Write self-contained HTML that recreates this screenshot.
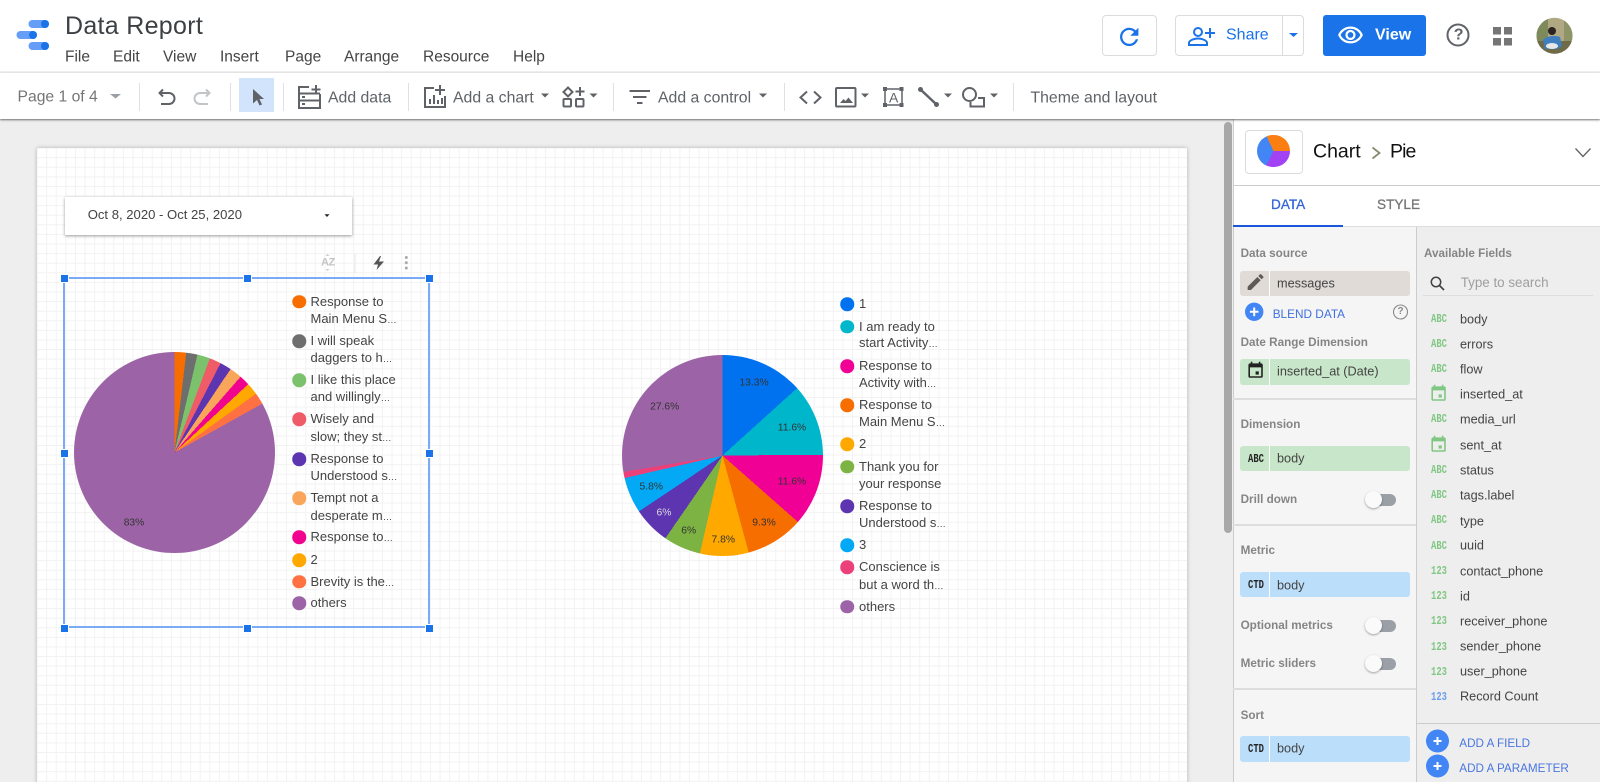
<!DOCTYPE html>
<html><head><meta charset="utf-8"><title>Data Report</title>
<style>
html{background:#eee}
html,body{margin:0;padding:0;width:1600px;height:782px;overflow:hidden;font-family:"Liberation Sans",sans-serif;color:#444}
body{background:#eee;filter:blur(.3px)}
.a{position:absolute}
.t{position:absolute;transform:translateY(-50%);white-space:nowrap;line-height:1.2}
svg.o{position:absolute;left:0;top:0;overflow:visible}
.menu{font-size:15.5px;color:#444;top:57.5px}
.tb{font-size:15.8px;color:#5f6368;top:99px}
.sep{position:absolute;top:83px;height:28px;width:1px;background:#e0e0e0}
.lab{font-size:11.7px;font-weight:bold;color:#858585;left:1240.6px;margin-top:1px}
.f{font-size:12.7px;color:#444;left:1460px;margin-top:1px}
.c{font-size:12.7px;color:#444;left:1277px}
.chip{position:absolute;left:1240px;width:170px;border-radius:3px}
.chip i{position:absolute;left:29px;top:0;bottom:0;width:1px;background:#fff}
.m{position:absolute;font-family:"Liberation Mono",monospace;font-weight:bold;font-size:11.5px;margin-top:1px;transform:translateY(-50%) scaleX(.77);transform-origin:left center;white-space:nowrap;line-height:1.2}
.tg{position:absolute;left:1373px;width:23px;height:12px;border-radius:6px;background:#9aa0a6}
.tg b{position:absolute;left:-8px;top:-3px;width:17px;height:17px;border-radius:50%;background:#fafafa;box-shadow:0 1px 2px rgba(0,0,0,.35)}
.d{position:absolute;left:1233px;width:183px;height:2px;background:#ddd}
.h{position:absolute;width:7px;height:7px;background:#1a73e8;border:1px solid #fff;margin:-4.5px 0 0 -4.5px}
.lg{font-size:13px;color:#444}
.lg s{text-decoration:none;font-size:9.5px}
.dot{position:absolute;width:13.5px;height:13.5px;border-radius:50%;transform:translate(-50%,-50%)}
.pl{font-size:10.3px;color:#333;transform:translate(-50%,-50%);position:absolute;white-space:nowrap}
.pie{position:absolute;border-radius:50%}
</style></head><body>

<!-- header -->
<div class="a" style="left:0;top:0;width:1600px;height:71px;background:#fff"></div>
<div class="a" style="left:0;top:71px;width:1600px;height:2px;background:#efefef"></div>
<div class="a" style="left:0;top:73px;width:1600px;height:45.5px;background:#fff;box-shadow:0 1px 2px rgba(0,0,0,.55);z-index:3"></div>

<!-- canvas page -->
<div class="a" style="left:37px;top:148px;width:1150px;height:640px;background-color:#fff;background-image:linear-gradient(#f2f2f2 1px,transparent 1px),linear-gradient(90deg,#f2f2f2 1px,transparent 1px);background-size:9.6px 9.6px;background-position:-0.4px 9.2px,9.2px 0;box-shadow:0 0 4px rgba(0,0,0,.25)"></div>

<!-- scrollbar -->
<div class="a" style="left:1224px;top:122px;width:8px;height:411px;background:#a8a8a8;border-radius:4px"></div>

<!-- right panel backgrounds -->
<div class="a" style="left:1233px;top:119px;width:367px;height:663px;background:#fff;border-left:1px solid #ccc;box-sizing:border-box"></div>
<div class="a" style="left:1234px;top:185px;width:366px;height:1px;background:#ccc"></div>
<div class="a" style="left:1234px;top:227px;width:182px;height:555px;background:#f5f5f5"></div>
<div class="a" style="left:1416px;top:227px;width:184px;height:555px;background:#eee;border-left:1px solid #ccc;box-sizing:border-box"></div>
<div class="a" style="left:1234px;top:226px;width:366px;height:1px;background:#ddd"></div>
<div class="a" style="left:1233px;top:225px;width:110px;height:2px;background:#1a56db"></div>

<!-- main svg icons -->
<svg class="o" width="1600" height="782" style="z-index:4" fill="none" stroke-linecap="butt">
<defs>
<symbol id="cal" viewBox="0 0 24 24"><path fill="currentColor" d="M19 3h-1V1h-2v2H8V1H6v2H5c-1.11 0-1.99.9-1.99 2L3 19c0 1.1.89 2 2 2h14c1.1 0 2-.9 2-2V5c0-1.1-.9-2-2-2zm0 16H5V8h14v11z"/><rect fill="currentColor" x="12" y="13" width="4" height="4"/></symbol>
<clipPath id="av"><circle cx="1554.5" cy="35.8" r="18"/></clipPath>
</defs>
<!-- logo -->
<rect x="28.5" y="20" width="20.5" height="8" rx="4" fill="#669df6"/><circle cx="45" cy="24" r="4" fill="#1a73e8"/>
<rect x="16.5" y="31" width="20.5" height="8" rx="4" fill="#669df6"/><circle cx="33" cy="35" r="4" fill="#1a73e8"/>
<rect x="28.5" y="42" width="20.5" height="8" rx="4" fill="#669df6"/><circle cx="45" cy="46" r="4" fill="#1a73e8"/>
<!-- refresh -->
<g transform="translate(1115.400,23.100) scale(1.150)" fill="#1a73e8"><path d="M17.65 6.35C16.2 4.9 14.21 4 12 4c-4.42 0-7.99 3.58-7.99 8s3.57 8 7.99 8c3.73 0 6.84-2.55 7.73-6h-2.08c-.82 2.33-3.04 4-5.65 4-3.31 0-6-2.69-6-6s2.69-6 6-6c1.66 0 3.14.69 4.22 1.78L13 11h7V4l-2.35 2.35z"/></g>
<!-- share person -->
<g stroke="#1a73e8" stroke-width="2"><circle cx="1198" cy="32" r="4"/><path d="M1189 45v-2c0-3 6-4.500 9-4.500s9 1.500 9 4.500v2z"/><path d="M1210 28v10M1205 33h10"/></g>
<path d="M1289 33h9l-4.500 4z" fill="#1a73e8"/>
<!-- help -->
<circle cx="1458" cy="35" r="10.500" stroke="#5f6368" stroke-width="2"/>
<!-- grid -->
<g fill="#757575"><rect x="1493" y="27" width="8" height="7.500"/><rect x="1504" y="27" width="8" height="7.500"/><rect x="1493" y="38" width="8" height="7.500"/><rect x="1504" y="38" width="8" height="7.500"/></g>
<!-- avatar -->
<g clip-path="url(#av)"><rect x="1536" y="17" width="38" height="38" fill="#b0a883"/><rect x="1536" y="17" width="12" height="24" fill="#7f8a5c"/><rect x="1564" y="20" width="10" height="22" fill="#8f9468"/><rect x="1536" y="41" width="38" height="15" fill="#6f6a48"/><circle cx="1552" cy="31" r="4" fill="#2b2420"/><path d="M1543 40c3-4 12-5 17-3l2 9-5 3h-12z" fill="#3f7fc0"/><ellipse cx="1552" cy="46" rx="6" ry="3" fill="#e8e8e8"/></g>

<!-- toolbar -->
<path d="M110 94h11l-5.500 4.500z" fill="#9aa0a6"/>
<g stroke="#5f6368" stroke-width="2"><path d="M163 89.500l-3.500 3.500 3.500 3.500M160 93h9a5 5 0 0 1 0 11h-8"/></g>
<g stroke="#c2c5c8" stroke-width="2"><path d="M206 89.500l3.500 3.500-3.500 3.500M209 93h-9a5 5 0 0 0 0 11h8"/></g>
<path d="M253 89l11 10h-4.500l2.500 5.500-2.500 1-2.500-5.500-4 3.500z" fill="#5f6368"/>
<!-- add data -->
<g stroke="#5f6368" stroke-width="2"><path d="M309 87h-10v21h21v-14M299 93.500h21M299 100.500h21M316 85v9M311.500 89.500h9"/><path d="M302 97h3M302 104h3"/></g>
<!-- add chart -->
<g stroke="#5f6368" stroke-width="2"><path d="M434 88h-9v19h20v-11M430 99v5M434 95v9M438 100v4M442 98v6M440 85v10M435 90h10"/></g>
<path d="M541 93.500h8l-4 4z" fill="#5f6368"/>
<!-- components -->
<g stroke="#5f6368" stroke-width="2"><path d="M568 87.500l4.500 4.500-4.500 4.500-4.500-4.500z"/><path d="M580 87v9M575.500 91.500h9"/><rect x="563.500" y="99" width="7.500" height="7.500" rx="1"/><rect x="576" y="99" width="7.500" height="7.500" rx="1"/></g>
<path d="M589.500 93.500h8l-4 4z" fill="#5f6368"/>
<!-- filter -->
<g stroke="#5f6368" stroke-width="2"><path d="M629.500 91h20.500M633 97h13.500M637 103h5.500"/></g>
<path d="M759 93.500h8l-4 4z" fill="#5f6368"/>
<!-- code -->
<g stroke="#5f6368" stroke-width="2"><path d="M807 91.500l-6.500 6 6.500 6M814 91.500l6.500 6-6.500 6"/></g>
<!-- image -->
<g stroke="#5f6368" stroke-width="2"><rect x="836" y="88" width="19.500" height="18.500" rx="1"/></g>
<path d="M840 103l3.500-4 2 2 3-3.500 4.500 5.500z" fill="#5f6368"/>
<path d="M861 93.500h8l-4 4z" fill="#5f6368"/>
<!-- text box -->
<rect x="885" y="89" width="17" height="16" stroke="#5f6368" stroke-width="1.500"/>
<g fill="#5f6368"><rect x="883" y="87" width="4" height="4"/><rect x="899.500" y="87" width="4" height="4"/><rect x="883" y="103" width="4" height="4"/><rect x="899.500" y="103" width="4" height="4"/></g>
<!-- line -->
<path d="M920.500 89.500l16 15" stroke="#5f6368" stroke-width="2.500"/><circle cx="920.500" cy="89.500" r="2.500" fill="#5f6368"/><circle cx="936.500" cy="104.500" r="2.500" fill="#5f6368"/>
<path d="M944 93.500h8l-4 4z" fill="#5f6368"/>
<!-- shape -->
<circle cx="969.500" cy="94.500" r="6.500" stroke="#5f6368" stroke-width="2"/><path d="M978 98h6v8.500h-13.500v-4.500" stroke="#5f6368" stroke-width="2"/>
<path d="M990 93.500h8l-4 4z" fill="#5f6368"/>

<!-- panel chevron, arrow -->
<path d="M1575.500 148.500l7.500 8 7.500-8" stroke="#5f6368" stroke-width="1.300"/>
<path d="M1372.500 147.500l7 5.500-7 5.500" stroke="#8a8a72" stroke-width="1.800"/>

<!-- pencil -->
<g transform="translate(1245,271.500) scale(.88)" fill="#5f5a56"><path d="M3 17.250V21h3.750L17.810 9.940l-3.750-3.750L3 17.250zM20.710 7.040c.39-.39.39-1.020 0-1.410l-2.340-2.340c-.39-.39-1.020-.39-1.410 0l-1.830 1.830 3.750 3.750 1.830-1.830z"/></g>
<!-- blend plus -->
<circle cx="1254.200" cy="311.800" r="9.200" fill="#4285f4"/><path d="M1254.200 307.500v8.600M1249.900 311.800h8.600" stroke="#fff" stroke-width="2"/>
<circle cx="1400.500" cy="312" r="7" stroke="#8a8a8a" stroke-width="1.100"/>
<!-- search -->
<circle cx="1436" cy="282" r="4.700" stroke="#424242" stroke-width="1.500"/><path d="M1439.500 285.500l4.500 4.500" stroke="#424242" stroke-width="1.700"/>
<!-- add circles -->
<circle cx="1437.500" cy="741" r="11.500" fill="#4285f4"/><path d="M1437.500 737v8M1433.500 741h8" stroke="#fff" stroke-width="2"/>
<circle cx="1437.500" cy="766" r="11.500" fill="#4285f4"/><path d="M1437.500 762v8M1433.500 766h8" stroke="#fff" stroke-width="2"/>
<circle cx="1252" cy="790" r="8" fill="#4285f4"/>
</svg>

<!-- title & menu -->
<div class="t" style="left:65px;top:25.500px;font-size:25px;letter-spacing:.3px;color:#3c4043;z-index:5">Data Report</div>
<div class="t menu" style="left:65px">File</div>
<div class="t menu" style="left:113px">Edit</div>
<div class="t menu" style="left:163px">View</div>
<div class="t menu" style="left:220px">Insert</div>
<div class="t menu" style="left:285px">Page</div>
<div class="t menu" style="left:344px">Arrange</div>
<div class="t menu" style="left:423px">Resource</div>
<div class="t menu" style="left:513px">Help</div>

<!-- top right buttons -->
<div class="a" style="left:1102px;top:15px;width:55px;height:41px;border:1px solid #dadce0;border-radius:4px;box-sizing:border-box;z-index:1"></div>
<div class="a" style="left:1175px;top:15px;width:129px;height:41px;border:1px solid #dadce0;border-radius:4px;box-sizing:border-box;z-index:1"></div>
<div class="a" style="left:1282px;top:15px;width:1px;height:41px;background:#dadce0;z-index:1"></div>
<div class="t" style="left:1226px;top:34.700px;font-size:16px;color:#1a73e8;z-index:5">Share</div>
<div class="a" style="left:1323px;top:15px;width:103px;height:41px;background:#1a73e8;border-radius:3px;z-index:1"></div>
<svg class="a" style="left:1337px;top:22px;z-index:5" width="27" height="27" viewBox="0 0 24 24" fill="#fff"><path d="M12 6c3.790 0 7.170 2.130 8.820 5.500C19.170 14.870 15.790 17 12 17s-7.170-2.130-8.820-5.500C4.830 8.130 8.210 6 12 6m0-2C7 4 2.730 7.110 1 11.500 2.730 15.890 7 19 12 19s9.270-3.110 11-7.500C21.270 7.110 17 4 12 4zm0 5c1.380 0 2.500 1.120 2.500 2.500S13.380 14 12 14s-2.500-1.120-2.500-2.500S10.620 9 12 9zm0-2c-2.480 0-4.500 2.020-4.500 4.500S9.520 16 12 16s4.500-2.020 4.500-4.500S14.480 7 12 7z"/></svg>
<div class="t" style="left:1375px;top:35px;font-size:16px;font-weight:bold;color:#fff;z-index:5">View</div>
<div class="t" style="left:1453.700px;top:35px;font-size:16px;font-weight:bold;color:#5f6368;z-index:5">?</div>

<!-- toolbar text -->
<div class="a" style="left:239px;top:78px;width:35px;height:34px;background:#d2e3fc;z-index:3"></div>
<div class="sep" style="left:139px;z-index:4"></div><div class="sep" style="left:230px;z-index:4"></div><div class="sep" style="left:283px;z-index:4"></div><div class="sep" style="left:408px;z-index:4"></div><div class="sep" style="left:613px;z-index:4"></div><div class="sep" style="left:784px;z-index:4"></div><div class="sep" style="left:1013px;z-index:4"></div>
<div class="t tb" style="left:17.500px;top:98px;font-size:15.700px;color:#757575;z-index:5">Page 1 of 4</div>
<div class="t tb" style="left:328px;z-index:5">Add data</div>
<div class="t tb" style="left:453px;z-index:5">Add a chart</div>
<div class="t tb" style="left:658px;z-index:5">Add a control</div>
<div class="t tb" style="left:1030.500px;z-index:5">Theme and layout</div>
<div class="t" style="left:889px;top:97.500px;font-size:14px;color:#5f6368;z-index:5">A</div>

<!-- date control -->
<div class="a" style="left:65px;top:197px;width:287px;height:38px;background:#fff;box-shadow:0 1px 3px rgba(0,0,0,.4)"></div>
<div class="t" style="left:87.700px;top:215px;font-size:13.100px;color:#444">Oct 8, 2020 - Oct 25, 2020</div>
<svg class="o" width="1600" height="782"><path d="M324.500 214.200h5l-2.500 2.800z" fill="#222"/>
<path d="M355 254v19" stroke="#e6e6e6"/>
<path d="M327.500 254l2 2h-4zM327.500 271l2-2h-4z" fill="#ccc"/>
<path d="M380 256l-6.500 8.500h4.500l-1.500 5.500 7.500-8.500h-5l2-5.500z" fill="#555"/>
<g fill="#aaa"><circle cx="406.300" cy="257.500" r="1.500"/><circle cx="406.300" cy="262.800" r="1.500"/><circle cx="406.300" cy="268" r="1.500"/></g></svg>
<div class="t" style="left:321px;top:262.500px;font-size:11px;font-weight:bold;color:#c4c4c4;letter-spacing:-.5px">AZ</div>

<!-- pie 1 -->
<div class="pie" style="left:74.300px;top:352px;width:201px;height:201px;background:conic-gradient(#f76d00 0 6.700deg,#6e6e6e 0 13.200deg,#7cc16c 0 20.600deg,#ef5b67 0 27.300deg,#5e35b1 0 33.900deg,#f9a55a 0 41.100deg,#f0048f 0 47.200deg,#ffa800 0 54.200deg,#ff7043 0 60.900deg,#9c64a6 0)"></div>
<div class="pl" style="left:134px;top:522.700px">83%</div>

<!-- selection -->
<div class="a" style="left:63px;top:277px;width:367px;height:351px;border:2px solid #7baaf7;box-sizing:border-box"></div>
<div class="h" style="left:64px;top:278px"></div><div class="h" style="left:247.500px;top:278px"></div><div class="h" style="left:429.500px;top:278px"></div>
<div class="h" style="left:64px;top:453.700px"></div><div class="h" style="left:429.500px;top:453.700px"></div>
<div class="h" style="left:64px;top:628px"></div><div class="h" style="left:247.500px;top:628px"></div><div class="h" style="left:429.500px;top:628px"></div>

<!-- legend 1 -->
<div class="dot" style="left:299.300px;top:301.700px;background:#f76d00"></div>
<div class="t lg" style="left:310.500px;top:301.700px">Response to</div><div class="t lg" style="left:310.500px;top:319px">Main Menu S<s>…</s></div>
<div class="dot" style="left:299.300px;top:341px;background:#6e6e6e"></div>
<div class="t lg" style="left:310.500px;top:341px">I will speak</div><div class="t lg" style="left:310.500px;top:358.300px">daggers to h<s>…</s></div>
<div class="dot" style="left:299.300px;top:380px;background:#7cc16c"></div>
<div class="t lg" style="left:310.500px;top:380px">I like this place</div><div class="t lg" style="left:310.500px;top:397.300px">and willingly<s>…</s></div>
<div class="dot" style="left:299.300px;top:419px;background:#ef5b67"></div>
<div class="t lg" style="left:310.500px;top:419px">Wisely and</div><div class="t lg" style="left:310.500px;top:436.700px">slow; they st<s>…</s></div>
<div class="dot" style="left:299.300px;top:459px;background:#5e35b1"></div>
<div class="t lg" style="left:310.500px;top:459px">Response to</div><div class="t lg" style="left:310.500px;top:476px">Understood s<s>…</s></div>
<div class="dot" style="left:299.300px;top:498.300px;background:#f9a55a"></div>
<div class="t lg" style="left:310.500px;top:498.300px">Tempt not a</div><div class="t lg" style="left:310.500px;top:515.700px">desperate m<s>…</s></div>
<div class="dot" style="left:299.300px;top:537.300px;background:#f0048f"></div>
<div class="t lg" style="left:310.500px;top:537.300px">Response to<s>…</s></div>
<div class="dot" style="left:299.300px;top:560px;background:#ffa800"></div>
<div class="t lg" style="left:310.500px;top:560px">2</div>
<div class="dot" style="left:299.300px;top:581.700px;background:#ff7043"></div>
<div class="t lg" style="left:310.500px;top:581.700px">Brevity is the<s>…</s></div>
<div class="dot" style="left:299.300px;top:603.300px;background:#9c64a6"></div>
<div class="t lg" style="left:310.500px;top:603.300px">others</div>

<!-- pie 2 -->
<div class="pie" style="left:621.700px;top:355px;width:201.400px;height:201.400px;background:conic-gradient(#0072f0 0 47.900deg,#00b6cb 0 89.600deg,#f10096 0 131.400deg,#f66d00 0 164.900deg,#ffa800 0 193deg,#7cb342 0 214.600deg,#5e35b1 0 236.200deg,#03a9f4 0 257deg,#ec407a 0 260.600deg,#9c64a6 0)"></div>
<div class="pl" style="left:754px;top:383.300px">13.3%</div>
<div class="pl" style="left:792px;top:428.300px">11.6%</div>
<div class="pl" style="left:792px;top:482.300px">11.6%</div>
<div class="pl" style="left:764px;top:523.300px">9.3%</div>
<div class="pl" style="left:723.300px;top:540px">7.8%</div>
<div class="pl" style="left:688.700px;top:531px">6%</div>
<div class="pl" style="left:664px;top:513.300px;color:#ddd">6%</div>
<div class="pl" style="left:651.300px;top:486.700px">5.8%</div>
<div class="pl" style="left:664.700px;top:407px">27.6%</div>

<!-- legend 2 -->
<div class="dot" style="left:847px;top:304px;background:#0072f0"></div>
<div class="t lg" style="left:859px;top:304px">1</div>
<div class="dot" style="left:847px;top:326.700px;background:#00b6cb"></div>
<div class="t lg" style="left:859px;top:326.700px">I am ready to</div><div class="t lg" style="left:859px;top:343.300px">start Activity<s>…</s></div>
<div class="dot" style="left:847px;top:366px;background:#f10096"></div>
<div class="t lg" style="left:859px;top:366px">Response to</div><div class="t lg" style="left:859px;top:383.300px">Activity with<s>…</s></div>
<div class="dot" style="left:847px;top:405px;background:#f66d00"></div>
<div class="t lg" style="left:859px;top:405px">Response to</div><div class="t lg" style="left:859px;top:422.300px">Main Menu S<s>…</s></div>
<div class="dot" style="left:847px;top:444.300px;background:#ffa800"></div>
<div class="t lg" style="left:859px;top:444.300px">2</div>
<div class="dot" style="left:847px;top:466.700px;background:#7cb342"></div>
<div class="t lg" style="left:859px;top:466.700px">Thank you for</div><div class="t lg" style="left:859px;top:484px">your response</div>
<div class="dot" style="left:847px;top:506px;background:#5e35b1"></div>
<div class="t lg" style="left:859px;top:506px">Response to</div><div class="t lg" style="left:859px;top:523.300px">Understood s<s>…</s></div>
<div class="dot" style="left:847px;top:545px;background:#03a9f4"></div>
<div class="t lg" style="left:859px;top:545px">3</div>
<div class="dot" style="left:847px;top:567.300px;background:#ec407a"></div>
<div class="t lg" style="left:859px;top:567.300px">Conscience is</div><div class="t lg" style="left:859px;top:584.700px">but a word th<s>…</s></div>
<div class="dot" style="left:847px;top:606.700px;background:#9c64a6"></div>
<div class="t lg" style="left:859px;top:606.700px">others</div>

<!-- panel header -->
<div class="a" style="left:1245px;top:130px;width:58px;height:44px;border:1px solid #dadce0;border-radius:4px;box-sizing:border-box;background:#fff"></div>
<div class="pie" style="left:1257px;top:134.600px;width:32.800px;height:32.800px;background:conic-gradient(from -25deg,#fb7e13 0 115deg,#a142f4 0 232deg,#4285f4 0)"></div>
<div class="t" style="left:1313px;top:152px;font-size:19.500px;color:#111">Chart</div>
<div class="t" style="left:1390px;top:152px;font-size:19.500px;letter-spacing:-.9px;color:#111">Pie</div>
<div class="t" style="left:1271px;top:204.700px;font-size:13.600px;color:#3367d6;-webkit-text-stroke:.3px #3367d6">DATA</div>
<div class="t" style="left:1377px;top:204.700px;font-size:13.600px;color:#757575;-webkit-text-stroke:.3px #757575">STYLE</div>

<!-- left col -->
<div class="t lab" style="top:253px">Data source</div>
<div class="chip" style="top:271px;height:24.500px;background:#e0dbd7"><i></i></div>
<div class="t c" style="top:284px;z-index:5">messages</div>
<div class="t" style="left:1272.700px;top:314px;font-size:11.800px;color:#3f6fe0;z-index:5">BLEND DATA</div>
<div class="t" style="left:1397.500px;top:312px;font-size:10px;color:#8a8a8a;font-weight:bold;z-index:5">?</div>
<div class="t lab" style="top:342.300px">Date Range Dimension</div>
<div class="chip" style="top:359px;height:25.700px;background:#c8e6c9"><i></i></div>
<svg class="a" style="left:1245.500px;top:361px;color:#222" width="19.200" height="19.200"><use href="#cal"/></svg>
<div class="t c" style="top:371.500px">inserted_at (Date)</div>
<div class="d" style="top:397.500px"></div>
<div class="t lab" style="top:424.300px">Dimension</div>
<div class="chip" style="top:446.300px;height:24.700px;background:#c8e6c9"><i></i></div>
<div class="m" style="left:1247.500px;top:459px;color:#222">ABC</div>
<div class="t c" style="top:459px">body</div>
<div class="t lab" style="top:499.300px">Drill down</div>
<div class="tg" style="top:494px"><b></b></div>
<div class="d" style="top:523.500px"></div>
<div class="t lab" style="top:550px">Metric</div>
<div class="chip" style="top:572px;height:25px;background:#bbdefb"><i></i></div>
<div class="m" style="left:1247.500px;top:585px;color:#222">CTD</div>
<div class="t c" style="top:585.500px">body</div>
<div class="t lab" style="top:625px">Optional metrics</div>
<div class="tg" style="top:620px"><b></b></div>
<div class="t lab" style="top:663px">Metric sliders</div>
<div class="tg" style="top:658px"><b></b></div>
<div class="d" style="top:688px"></div>
<div class="t lab" style="top:715px">Sort</div>
<div class="chip" style="top:736px;height:25.700px;background:#bbdefb"><i></i></div>
<div class="m" style="left:1247.500px;top:749px;color:#222">CTD</div>
<div class="t c" style="top:748.500px">body</div>

<!-- right col -->
<div class="t lab" style="left:1424px;top:253px">Available Fields</div>
<div class="t" style="left:1460.700px;top:282.500px;font-size:13.400px;color:#9e9e9e">Type to search</div>
<div class="a" style="left:1423px;top:295px;width:170px;height:1px;background:#ddd"></div>
<div class="m" style="left:1431px;top:318.700px;color:#81c784">ABC</div><div class="t f" style="top:318.700px">body</div>
<div class="m" style="left:1431px;top:344px;color:#81c784">ABC</div><div class="t f" style="top:344px">errors</div>
<div class="m" style="left:1431px;top:369px;color:#81c784">ABC</div><div class="t f" style="top:368.700px">flow</div>
<svg class="a" style="left:1429.300px;top:384px;color:#81c784" width="19.200" height="19.200"><use href="#cal"/></svg><div class="t f" style="top:393.700px">inserted_at</div>
<div class="m" style="left:1431px;top:419.300px;color:#81c784">ABC</div><div class="t f" style="top:419.300px">media_url</div>
<svg class="a" style="left:1429.300px;top:435px;color:#81c784" width="19.200" height="19.200"><use href="#cal"/></svg><div class="t f" style="top:444.700px">sent_at</div>
<div class="m" style="left:1431px;top:469.700px;color:#81c784">ABC</div><div class="t f" style="top:469.700px">status</div>
<div class="m" style="left:1431px;top:495px;color:#81c784">ABC</div><div class="t f" style="top:494.700px">tags.label</div>
<div class="m" style="left:1431px;top:520.300px;color:#81c784">ABC</div><div class="t f" style="top:520.700px">type</div>
<div class="m" style="left:1431px;top:545.500px;color:#81c784">ABC</div><div class="t f" style="top:545px">uuid</div>
<div class="m" style="left:1431px;top:571px;color:#81c784">123</div><div class="t f" style="top:570.700px">contact_phone</div>
<div class="m" style="left:1431px;top:596px;color:#81c784">123</div><div class="t f" style="top:595.700px">id</div>
<div class="m" style="left:1431px;top:621px;color:#81c784">123</div><div class="t f" style="top:621px">receiver_phone</div>
<div class="m" style="left:1431px;top:646.500px;color:#81c784">123</div><div class="t f" style="top:646px">sender_phone</div>
<div class="m" style="left:1431px;top:671.500px;color:#81c784">123</div><div class="t f" style="top:671px">user_phone</div>
<div class="m" style="left:1431px;top:696.500px;color:#6d9eeb">123</div><div class="t f" style="top:696px">Record Count</div>
<div class="a" style="left:1417px;top:723px;width:183px;height:1px;background:#ccc"></div>
<div class="t" style="left:1459.300px;top:743.500px;font-size:11.700px;color:#4a76e0;z-index:5">ADD A FIELD</div>
<div class="t" style="left:1459.300px;top:768.500px;font-size:11.700px;color:#4a76e0;z-index:5">ADD A PARAMETER</div>

</body></html>
